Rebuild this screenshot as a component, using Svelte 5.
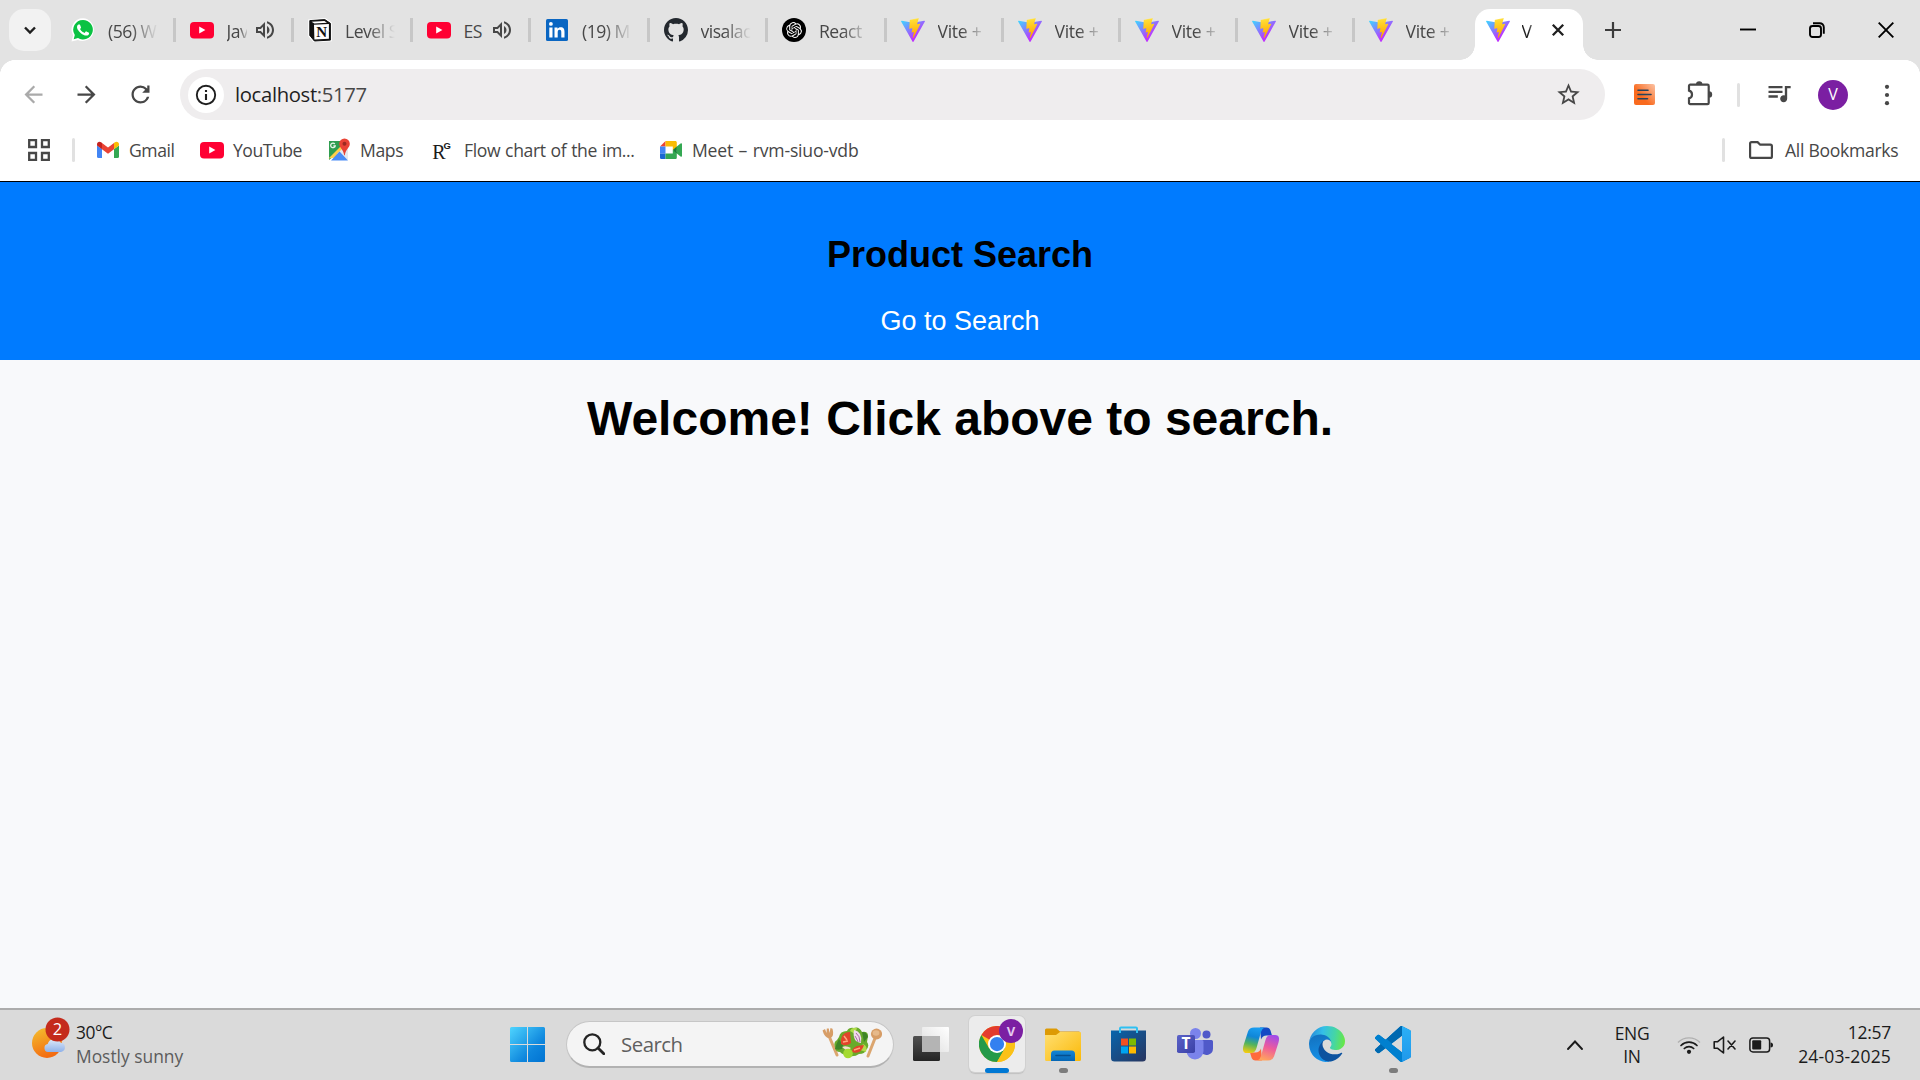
<script>
  const tabs = [
    { icon: 'whatsapp', title: '(56) W' },
    { icon: 'youtube', title: 'Jav', audio: true },
    { icon: 'notion', title: 'Level S' },
    { icon: 'youtube', title: 'ES', audio: true, whole: true },
    { icon: 'linkedin', title: '(19) M' },
    { icon: 'github', title: 'visalac' },
    { icon: 'openai', title: 'React' },
    { icon: 'vite', title: 'Vite +' },
    { icon: 'vite', title: 'Vite +' },
    { icon: 'vite', title: 'Vite +' },
    { icon: 'vite', title: 'Vite +' },
    { icon: 'vite', title: 'Vite +', last: true }
  ];
  const bookmarks = [
    { icon: 'gmail', title: 'Gmail', key: 'gmail' },
    { icon: 'youtube', title: 'YouTube', key: 'yt' },
    { icon: 'maps', title: 'Maps', key: 'maps' },
    { icon: 'rg', title: 'Flow chart of the im...', key: 'flow' },
    { icon: 'meet', title: 'Meet – rvm-siuo-vdb', key: 'meet' }
  ];
</script>

{#snippet favicon(name)}
  {#if name === 'whatsapp'}
    <svg class="fav" viewBox="0 0 24 24">
      <path fill="#fff" d="M12 .3a11.3 11.3 0 0 0-9.9 16.9L.5 23.6l6.4-1.7A11.3 11.3 0 1 0 12 .3z" />
      <path fill="#0bc243" d="M12 1.9a9.8 9.8 0 0 0-8.2 15.1l-1.1 4.2 4.3-1.1A9.8 9.8 0 1 0 12 1.9z" />
      <path fill="#fff" d="M17.472 14.382c-.297-.149-1.758-.867-2.03-.967-.273-.099-.471-.148-.67.15-.197.297-.767.966-.94 1.164-.173.199-.347.223-.644.075-.297-.15-1.255-.463-2.39-1.475-.883-.788-1.48-1.761-1.653-2.059-.173-.297-.018-.458.13-.606.134-.133.298-.347.446-.52.149-.174.198-.298.298-.497.099-.198.05-.371-.025-.52-.075-.149-.669-1.612-.916-2.207-.242-.579-.487-.5-.669-.51-.173-.008-.371-.01-.57-.01-.198 0-.52.074-.792.372-.272.297-1.04 1.016-1.04 2.479 0 1.462 1.065 2.875 1.213 3.074.149.198 2.096 3.2 5.077 4.487.709.306 1.262.489 1.694.625.712.227 1.36.195 1.871.118.571-.085 1.758-.719 2.006-1.413.248-.694.248-1.289.173-1.413-.074-.124-.272-.198-.57-.347z" />
    </svg>
  {:else if name === 'youtube'}
    <svg class="fav" viewBox="0 0 24 24">
      <rect x="0" y="4" width="24" height="16.4" rx="4" fill="#ff0033" />
      <path d="M9.2 8.6v7l6.2-3.5z" fill="#fff" />
    </svg>
  {:else if name === 'notion'}
    <svg class="fav" viewBox="0 0 24 24">
      <path d="M1.2 2.4 17 1l5.8 4v17.4L6.2 23.4 1.2 17.6z" fill="#fff" stroke="#fff" stroke-width="2" />
      <path d="M1.8 2.6 16.8 1.6 22.4 5.3v16.8L6.4 23 1.8 17.4z" fill="#111" stroke="#111" stroke-linejoin="round" />
      <path d="M6 6.8 20.9 5.9v14.8L6.4 21.5zM3.6 3.7 16.4 2.9l2.6 1.8-12.6.8z" fill="#fff" />
      <text x="13.6" y="18.6" text-anchor="middle" class="notion-n">N</text>
    </svg>
  {:else if name === 'linkedin'}
    <svg class="fav" viewBox="0 0 24 24">
      <rect x="1" y="1" width="22" height="22" rx="1.6" fill="#0a66c2" />
      <circle cx="5.9" cy="5.9" r="1.9" fill="#fff" />
      <path fill="#fff" d="M4.3 9.4h3.2v10.2H4.3zM9.5 9.4h3v1.4c.6-1 1.7-1.65 3.1-1.65 3.1 0 3.9 2 3.9 4.8v5.65h-3.2v-5c0-1.3-.1-2.8-1.7-2.8s-1.9 1.3-1.9 2.7v5.1H9.5z" />
    </svg>
  {:else if name === 'github'}
    <svg class="fav" viewBox="0 0 16 16">
      <path fill="#24292f" d="M8 0C3.58 0 0 3.58 0 8c0 3.54 2.29 6.53 5.47 7.59.4.07.55-.17.55-.38 0-.19-.01-.82-.01-1.49-2.01.37-2.53-.49-2.69-.94-.09-.23-.48-.94-.82-1.13-.28-.15-.68-.52-.01-.53.63-.01 1.08.58 1.23.82.72 1.21 1.87.87 2.33.66.07-.52.28-.87.51-1.07-1.78-.2-3.64-.89-3.64-3.95 0-.87.31-1.59.82-2.15-.08-.2-.36-1.02.08-2.12 0 0 .67-.21 2.2.82.64-.18 1.32-.27 2-.27s1.36.09 2 .27c1.53-1.04 2.2-.82 2.2-.82.44 1.1.16 1.92.08 2.12.51.56.82 1.27.82 2.15 0 3.07-1.87 3.75-3.65 3.95.29.25.54.73.54 1.48 0 1.07-.01 1.93-.01 2.2 0 .21.15.46.55.38A8.01 8.01 0 0 0 16 8c0-4.42-3.58-8-8-8z" />
    </svg>
  {:else if name === 'openai'}
    <svg class="fav" viewBox="0 0 24 24">
      <circle cx="12" cy="12" r="12" fill="#000" />
      <path transform="translate(4.1 4.1) scale(.66)" fill="#fff" d="M22.2819 9.8211a5.9847 5.9847 0 0 0-.5157-4.9108 6.0462 6.0462 0 0 0-6.5098-2.9A6.0651 6.0651 0 0 0 4.9807 4.1818a5.9847 5.9847 0 0 0-3.9977 2.9 6.0462 6.0462 0 0 0 .7427 7.0966 5.98 5.98 0 0 0 .511 4.9107 6.051 6.051 0 0 0 6.5146 2.9001A5.9847 5.9847 0 0 0 13.2599 24a6.0557 6.0557 0 0 0 5.7718-4.2058 5.9894 5.9894 0 0 0 3.9977-2.9001 6.0557 6.0557 0 0 0-.7475-7.0729zm-9.022 12.6081a4.4755 4.4755 0 0 1-2.8764-1.0408l.1419-.0804 4.7783-2.7582a.7948.7948 0 0 0 .3927-.6813v-6.7369l2.02 1.1686a.071.071 0 0 1 .038.052v5.5826a4.504 4.504 0 0 1-4.4945 4.4944zm-9.6607-4.1254a4.4708 4.4708 0 0 1-.5346-3.0137l.142.0852 4.783 2.7582a.7712.7712 0 0 0 .7806 0l5.8428-3.3685v2.3324a.0804.0804 0 0 1-.0332.0615L9.74 19.9502a4.4992 4.4992 0 0 1-6.1408-1.6464zM2.3408 7.8956a4.485 4.485 0 0 1 2.3655-1.9728V11.6a.7664.7664 0 0 0 .3879.6765l5.8144 3.3543-2.0201 1.1685a.0757.0757 0 0 1-.071 0l-4.8303-2.7865A4.504 4.504 0 0 1 2.3408 7.872zm16.5963 3.8558L13.1038 8.364 15.1192 7.2a.0757.0757 0 0 1 .071 0l4.8303 2.7913a4.4944 4.4944 0 0 1-.6765 8.1042v-5.6772a.79.79 0 0 0-.407-.667zm2.0107-3.0231l-.142-.0852-4.7735-2.7818a.7759.7759 0 0 0-.7854 0L9.409 9.2297V6.8974a.0662.0662 0 0 1 .0284-.0615l4.8303-2.7866a4.4992 4.4992 0 0 1 6.6802 4.66zM8.3065 12.863l-2.02-1.1638a.0804.0804 0 0 1-.038-.0567V6.0742a4.4992 4.4992 0 0 1 7.3757-3.4537l-.142.0805L8.704 5.459a.7948.7948 0 0 0-.3927.6813zm1.0976-2.3654l2.602-1.4998 2.6069 1.4998v2.9994l-2.5974 1.4997-2.6067-1.4997Z" />
    </svg>
  {:else if name === 'vite'}
    <svg class="fav" viewBox="0 0 256 257">
      <path fill="url(#vite-body)" d="M255.153 37.938L134.897 252.976c-2.483 4.44-8.862 4.466-11.382.048L.875 37.958c-2.746-4.814 1.371-10.646 6.827-9.67l120.385 21.517a6.537 6.537 0 0 0 2.322-.004l117.867-21.483c5.438-.991 9.574 4.796 6.877 9.62Z" />
      <path fill="url(#vite-bolt)" d="M185.432.063L96.44 17.501a3.268 3.268 0 0 0-2.634 3.014l-5.474 92.456a3.268 3.268 0 0 0 3.997 3.378l24.777-5.718c2.318-.535 4.413 1.507 3.936 3.838l-7.361 36.047c-.495 2.426 1.782 4.5 4.151 3.78l15.304-4.649c2.372-.72 4.652 1.36 4.15 3.788l-11.698 56.621c-.732 3.542 3.979 5.473 5.943 2.437l1.313-2.028l72.516-144.72c1.215-2.423-.88-5.186-3.54-4.672l-25.505 4.922c-2.396.462-4.435-1.77-3.759-4.114l16.646-57.705c.677-2.35-1.37-4.583-3.769-4.113Z" />
    </svg>
  {:else if name === 'gmail'}
    <svg class="fav" viewBox="0 0 24 24">
      <path fill="#4285f4" d="M1 7.5v11.1A1.5 1.5 0 0 0 2.5 20.1H6V11z" />
      <path fill="#34a853" d="M23 7.5v11.1a1.5 1.5 0 0 1-1.5 1.5H18V11z" />
      <path fill="#ea4335" d="M6 11.2V4.9l6 4.6 6-4.6v6.3l-6 4.6z" />
      <path fill="#c5221f" d="M1 6.2C1 3.9 3.4 3 5.2 4.3L6 4.9v6.3L1 7.6z" />
      <path fill="#fbbc04" d="M23 6.2c0-2.3-2.4-3.2-4.2-1.9l-.8.6v6.3l5-3.6z" />
    </svg>
  {:else if name === 'maps'}
    <svg class="fav" viewBox="0 0 24 24">
      <path fill="#2f9e50" d="M2 3h18v10L12 14 2 22z" />
      <path fill="#ffd04b" d="M1.5 20.5 14 8l3.5 3.5-8 8z" />
      <path fill="#e6e9ee" d="m10 16 7-7 4 1v12z" />
      <path fill="#4a8cf6" d="M12.5 13.500 21 22.500H4z" />
      <path fill="none" stroke="#e8f5ea" stroke-width="1.3" d="M7.8 6a2.3 2.3 0 1 0 .4 2H6.4" />
      <path fill="#e94335" d="M17.5.5a5.3 5.3 0 0 1 5.3 5.3c0 4-4.3 5.6-5 11.4h-.6c-.7-5.8-5-7.4-5-11.4A5.3 5.3 0 0 1 17.5.5z" />
      <circle cx="17.5" cy="5.8" r="2" fill="#9c2a20" />
    </svg>
  {:else if name === 'rg'}
    <svg class="fav" viewBox="0 0 24 24">
      <text x="1.2" y="21" class="rg-r">R</text>
      <text x="12.6" y="10.8" class="rg-g">G</text>
    </svg>
  {:else if name === 'meet'}
    <svg class="fav" viewBox="0 0 24 24">
      <path fill="#ea4335" d="M6.500 3v5.500H1z" />
      <path fill="#fbbc04" d="M6.500 3h9.700c1 0 1.600.6 1.600 1.600V12l-4 0V8.500H6.500z" />
      <path fill="#4285f4" d="M1 8.500h5.500v7H1z" />
      <path fill="#1967d2" d="M1 15.500h5.500V21H2.600C1.600 21 1 20.400 1 19.400z" />
      <path fill="#34a853" d="M6.500 15.500h7.300V12l4 2v5.400c0 1-.6 1.600-1.600 1.600H6.500z" />
      <path fill="#34a853" d="m17.800 8.600 3.800-3.200c.7-.5 1.400-.2 1.400.6v12c0 .8-.7 1.100-1.400.6l-3.800-3.200z" />
      <path fill="#188038" d="m13.800 12 4-3.400v6.800z" />
    </svg>
  {/if}
{/snippet}

{#snippet path24(cls, d)}
  <svg class={cls} viewBox="0 0 24 24"><path {d} fill="currentColor" /></svg>
{/snippet}

<svg class="defs" width="0" height="0" aria-hidden="true">
  <defs>
    <linearGradient id="vite-body" x1="-.828%" x2="57.636%" y1="7.652%" y2="78.411%">
      <stop offset="0" stop-color="#41d1ff" /><stop offset="1" stop-color="#bd34fe" />
    </linearGradient>
    <linearGradient id="vite-bolt" x1="43.376%" x2="50.316%" y1="2.242%" y2="89.03%">
      <stop offset="0" stop-color="#ffea83" /><stop offset=".083" stop-color="#ffdd35" /><stop offset="1" stop-color="#ffa800" />
    </linearGradient>
    <linearGradient id="note" x1=".35" y1=".6" x2="1" y2="0">
      <stop offset="0" stop-color="#f96a1e" /><stop offset="1" stop-color="#fbc3a5" />
    </linearGradient>
    <linearGradient id="sun" x1="0" y1="0" x2=".4" y2="1">
      <stop offset="0" stop-color="#f4c12f" /><stop offset="1" stop-color="#f36c12" />
    </linearGradient>
    <linearGradient id="cloud" x1="0" y1="0" x2="0" y2="1">
      <stop offset="0" stop-color="#dfe9f8" /><stop offset="1" stop-color="#8fb2ea" />
    </linearGradient>
    <linearGradient id="win" gradientUnits="userSpaceOnUse" x1="0" y1="0" x2="35" y2="35">
      <stop offset="0" stop-color="#4fd5ff" /><stop offset=".65" stop-color="#0e86dd" /><stop offset="1" stop-color="#0173d2" />
    </linearGradient>
    <linearGradient id="tv-back" x1="0" y1="0" x2="0" y2="1">
      <stop offset="0" stop-color="#505050" /><stop offset="1" stop-color="#242424" />
    </linearGradient>
    <linearGradient id="tv-front" x1="1" y1="0" x2="0" y2="1">
      <stop offset="0" stop-color="#fff" /><stop offset="1" stop-color="#dcdcdc" />
    </linearGradient>
    <linearGradient id="folder" x1="0" y1="0" x2="1" y2="1">
      <stop offset="0" stop-color="#ffdf72" /><stop offset="1" stop-color="#fbb908" />
    </linearGradient>
    <linearGradient id="folder-tray" x1="0" y1="0" x2="0" y2="1">
      <stop offset="0" stop-color="#1486d6" /><stop offset="1" stop-color="#0566b5" />
    </linearGradient>
    <linearGradient id="store" x1="0" y1="0" x2="1" y2="1">
      <stop offset="0" stop-color="#0865ad" /><stop offset="1" stop-color="#28355f" />
    </linearGradient>
    <linearGradient id="teams" x1="0" y1="0" x2="1" y2="1">
      <stop offset="0" stop-color="#5b62c8" /><stop offset="1" stop-color="#3a40a6" />
    </linearGradient>
    <linearGradient id="cop-left" x1=".5" y1="0" x2=".3" y2="1">
      <stop offset="0" stop-color="#1a9df0" /><stop offset=".35" stop-color="#0f86d8" /><stop offset=".65" stop-color="#52b35e" /><stop offset="1" stop-color="#f2cc10" />
    </linearGradient>
    <linearGradient id="cop-right" x1=".7" y1="0" x2=".4" y2="1">
      <stop offset="0" stop-color="#a04bea" /><stop offset=".5" stop-color="#ee5b9b" /><stop offset="1" stop-color="#ffa45e" />
    </linearGradient>
    <linearGradient id="edge-top" x1="0" y1=".5" x2="1" y2=".6">
      <stop offset="0" stop-color="#2688d8" /><stop offset=".35" stop-color="#34bfe8" /><stop offset=".7" stop-color="#45d6a4" /><stop offset="1" stop-color="#69e842" />
    </linearGradient>
    <linearGradient id="edge-mid" x1=".3" y1="0" x2=".5" y2="1">
      <stop offset="0" stop-color="#1370bd" /><stop offset="1" stop-color="#1592ea" />
    </linearGradient>
    <linearGradient id="code-panel" x1="0" y1="0" x2="0" y2="1">
      <stop offset="0" stop-color="#2bb0f7" /><stop offset="1" stop-color="#1f98ea" />
    </linearGradient>
    <clipPath id="code-shape">
      <path clip-rule="evenodd" d="M23.15 2.587L18.21.21a1.494 1.494 0 0 0-1.705.29l-9.46 8.63-4.12-3.128a.999.999 0 0 0-1.276.057L.327 7.261A1 1 0 0 0 .326 8.74L3.899 12 .326 15.26a1 1 0 0 0 .001 1.479L1.65 17.94a.999.999 0 0 0 1.276.057l4.12-3.128 9.46 8.63a1.492 1.492 0 0 0 1.704.29l4.942-2.377A1.5 1.5 0 0 0 24 20.06V3.939a1.5 1.5 0 0 0-.85-1.352zm-5.146 14.861L10.826 12l7.178-5.448v10.896z" />
    </clipPath>
  </defs>
</svg>

<div class="screen">
  <div class="tab-strip">
    <button class="tab-search" aria-label="Search tabs">
      <svg viewBox="0 0 14 14"><path d="m2 4.500 5 5 5-5" fill="none" stroke="#1f1f1f" stroke-width="2.4" /></svg>
    </button>
    {#each tabs as tab, i}
      <div class="tab" class:narrow={i > 6} class:last={tab.last}>
        {@render favicon(tab.icon)}
        <span class="tab-title" class:short={tab.audio} class:whole={tab.whole}>{tab.title}</span>
        {#if tab.audio}
          {@render path24('audio', 'M3 9v6h4l5 5V4L7 9H3zm7-.17v6.34L7.83 13H5v-2h2.83L10 8.83zM16.5 12c0-1.77-1.02-3.29-2.5-4.03v8.05c1.48-.73 2.5-2.25 2.5-4.02z M14 3.23v2.06c2.89.86 5 3.54 5 6.71s-2.11 5.85-5 6.71v2.06c4.01-.91 7-4.49 7-8.77s-2.99-7.86-7-8.77z')}
        {/if}
      </div>
    {/each}
    <div class="tab-active">
      {@render favicon('vite')}
      <span class="tab-title">V</span>
      <svg class="close" viewBox="0 0 14 14"><path d="m1.8 1.800 10.400 10.400m0-10.400L1.800 12.200" stroke="#1f1f1f" stroke-width="2.3" /></svg>
    </div>
    <svg class="new-tab" viewBox="0 0 16 16"><path d="M8 0v16M0 8h16" stroke="#3c3c3c" stroke-width="2.2" /></svg>
    <div class="window-controls">
      <svg viewBox="0 0 16 16"><path d="M0 7.500h16" stroke="#000" stroke-width="1.9" /></svg>
      <svg viewBox="0 0 16 16"><rect x="1" y="4" width="11" height="11" rx="2.5" fill="none" stroke="#000" stroke-width="1.9" /><path d="M4 1.200h6.600A4 4 0 0 1 14.800 5.200v6.600" fill="none" stroke="#000" stroke-width="1.9" /></svg>
      <svg viewBox="0 0 16 16"><path d="m.7.7 14.600 14.600m0-14.600L.7 15.300" stroke="#000" stroke-width="1.9" /></svg>
    </div>
  </div>

  <div class="chrome-body">
    <div class="toolbar">
      {@render path24('nav back', 'M20 11H7.83l5.59-5.59L12 4l-8 8 8 8 1.41-1.41L7.83 13H20v-2z')}
      {@render path24('nav forward', 'M4 13h12.17l-5.59 5.59L12 20l8-8-8-8-1.41 1.41L16.17 11H4v2z')}
      {@render path24('nav reload', 'M17.65 6.35A7.958 7.958 0 0 0 12 4c-4.42 0-7.99 3.58-8 8s3.57 8 8 8c3.73 0 6.84-2.55 7.73-6h-2.08A5.99 5.99 0 0 1 12 18c-3.31 0-6-2.69-6-6s2.69-6 6-6c1.66 0 3.14.69 4.22 1.78L13.500 10.500H20V4h-2v2.700z')}
      <div class="omnibox">
        <span class="site-info">
          <svg viewBox="0 0 24 24"><circle cx="12" cy="12" r="9.2" fill="none" stroke="#1f1f1f" stroke-width="1.9" /><path d="M12 11v6M12 7v2.100" stroke="#1f1f1f" stroke-width="2.1" /></svg>
        </span>
        <span class="url">localhost<i>:5177</i></span>
        {@render path24('star', 'M22 9.24l-7.19-.62L12 2 9.19 8.63 2 9.24l5.46 4.73L5.82 21 12 17.27 18.18 21l-1.63-7.03L22 9.24zM12 15.4l-3.76 2.27 1-4.28-3.32-2.88 4.38-.38L12 6.1l1.71 4.04 4.38.38-3.32 2.88 1 4.28L12 15.4z')}
      </div>
      <svg class="note" viewBox="0 0 21 21"><rect width="21" height="21" rx="2" fill="url(#note)" /><path d="M4 6.300h10M4 10.500h13M4 14.700h9.500" stroke="#26435c" stroke-width="1.6" stroke-linecap="round" /></svg>
      <svg class="puzzle" viewBox="0 0 26 26"><path d="M3.3 4.700h17.200a1.200 1.200 0 0 1 1.200 1.200v17a1.200 1.200 0 0 1-1.200 1.200H3.300A1.200 1.200 0 0 1 2 22.900v-4.500q3-.6 3-3.900t-3-3.900V5.900a1.200 1.200 0 0 1 1.300-1.200z" fill="none" stroke="#474747" stroke-width="2.2" /><path d="M9 4.500a3.200 3.200 0 0 1 6.400 0zM22 11.200a3.200 3.200 0 0 1 0 6.400z" fill="#474747" /></svg>
      <i class="divider"></i>
      {@render path24('queue', 'M15 6H3v2h12V6zm0 4H3v2h12v-2zM3 16h8v-2H3v2zM17 6v8.18c-.31-.11-.65-.18-1-.18-1.66 0-3 1.34-3 3s1.34 3 3 3 3-1.34 3-3V8h3V6h-5z')}
      <span class="avatar">V</span>
      <svg class="dots" viewBox="0 0 6 24"><circle cx="3" cy="3.8" r="2.1" fill="#474747" /><circle cx="3" cy="12" r="2.1" fill="#474747" /><circle cx="3" cy="20.2" r="2.1" fill="#474747" /></svg>
    </div>

    <div class="bookmarks">
      <svg class="apps" viewBox="0 0 22 22"><path d="M1.2 1.200h6.800v6.800H1.200zM14 1.200h6.800v6.800H14zM1.200 14h6.800v6.800H1.200zM14 14h6.800v6.800H14z" fill="none" stroke="#474747" stroke-width="2.3" /></svg>
      <i class="divider first"></i>
      {#each bookmarks as mark}
        <span class="bookmark {mark.key}">{@render favicon(mark.icon)}<span>{mark.title}</span></span>
      {/each}
      <i class="divider end"></i>
      <svg class="folder" viewBox="0 0 24 18"><path d="M2.6 1.100h6L11.200 3.700h10.200a1.500 1.500 0 0 1 1.500 1.500v10.200a1.500 1.500 0 0 1-1.500 1.500H2.600a1.500 1.500 0 0 1-1.500-1.500V2.600a1.500 1.500 0 0 1 1.500-1.500z" fill="none" stroke="#474747" stroke-width="2.2" /></svg>
      <span class="all">All Bookmarks</span>
    </div>
  </div>

  <main>
    <header>
      <h2>Product Search</h2>
      <a href="#search">Go to Search</a>
    </header>
    <h1>Welcome! Click above to search.</h1>
  </main>

  <footer>
    <div class="weather">
      <svg viewBox="0 0 40 44">
        <circle cx="17" cy="27" r="15" fill="url(#sun)" />
        <path d="M18 36a4 4 0 0 1-.3-7.900A7 7 0 0 1 30.500 26.500 4.800 4.800 0 0 1 31 36z" fill="url(#cloud)" />
        <circle cx="27.5" cy="13.5" r="12" fill="#c42b1c" />
        <text x="27.5" y="19.3" text-anchor="middle" class="badge-num">2</text>
      </svg>
      <div><p class="temp">30°C</p><p class="sky">Mostly sunny</p></div>
    </div>

    <div class="dock">
      <svg class="start" viewBox="0 0 35 35"><path fill="url(#win)" d="M1.5 0H17v17H0V1.500A1.500 1.500 0 0 1 1.500 0zM18 0h15.500A1.500 1.500 0 0 1 35 1.500V17H18zM0 18h17v17H1.500A1.500 1.500 0 0 1 0 33.500zM18 18h17v15.500a1.500 1.500 0 0 1-1.500 1.500H18z" /></svg>
      <div class="search">
        <svg class="lens" viewBox="0 0 22 22"><circle cx="9.3" cy="9.3" r="8" fill="none" stroke="#242424" stroke-width="2.3" /><path d="m15 15 5.800 5.800" stroke="#242424" stroke-width="2.8" stroke-linecap="round" /></svg>
        <span>Search</span>
        <svg class="salad" viewBox="0 0 60 32">
          <g stroke="#dba56e" stroke-linecap="round" fill="none">
            <path d="m7 9 8 19" stroke-width="3" />
            <path d="M53.500 10 46 29" stroke-width="3" />
          </g>
          <path d="M.5 3.500 3 2l1.500 4L4.800 1.500h2L7.500 6 8.500 1l2 .8Q12.500 9 8.500 11 3 12 .5 3.500z" fill="#d79d66" />
          <ellipse cx="54.500" cy="7" rx="5.600" ry="5.400" fill="#d79d66" /><ellipse cx="54" cy="6" rx="3.400" ry="2.800" fill="#e6b98a" />
          <path d="M17 10q1-6 8-6 2-4 7-3 5-2 8 4 6-1 6 4l-1 6q3 4-1 8-1 4-7 4-4 3-10 2-6-1-9-4-5 0-5-5-2-5 2-7z" fill="#69aa2b" />
          <path d="M17 12q-3 5-4 10 6 2 9-2zM40 5q5 0 6 5l-4 5z" fill="#3e8526" />
          <path d="M28 4q2-4 7-3l-2 6zM41 17q5 2 3 8l-6-2z" fill="#b2dc4b" />
          <path d="M19 17q-1-12 9-12l1 11q-5 4-10 1z" fill="#e1442a" />
          <path d="M30 25q9 3 12-7l-7 1q-5 2-5 6z" fill="#e1442a" />
          <path d="m22 9 3 4m-4 2 5-1m6 9 6-2" stroke="#ffa67d" stroke-width="1.5" />
          <path d="M32 3q9 2 7 13-9-1-7-13z" fill="#f0dcec" /><path d="M34 6q4 3 4 9m-5-6q2 3 3 6" stroke="#aa6aa4" fill="none" />
          <path d="M20 20q4-2 9 1l-4 3z" fill="#f3e0cf" />
          <circle cx="26" cy="26.500" r="4.800" fill="#a4da30" />
        </svg>
      </div>
      <svg class="task-view" viewBox="0 0 36 34"><rect x="0" y="9" width="27" height="25" rx="1.5" fill="url(#tv-back)" /><rect x="9" y="0" width="27" height="25" rx="1" fill="url(#tv-front)" /><rect x="9" y="9" width="18" height="16" fill="#b4b4b4" /></svg>
      <div class="app current">
        <svg class="icon" viewBox="0 0 48 48">
          <circle cx="24" cy="24" r="24" fill="#fbc116" />
          <path d="M24 24 3.200 12A24 24 0 0 1 44.800 12z" fill="#e33b2e" />
          <path d="M3.200 12A24 24 0 0 0 24 48l10.400-18L24 24 13.600 30z" fill="#249a48" />
          <path d="M34.400 30 24 48A24 24 0 0 0 44.800 12H24z" fill="#fbc116" />
          <circle cx="24" cy="24" r="12" fill="#fff" />
          <circle cx="24" cy="24" r="9.5" fill="#3380f0" />
        </svg>
        <span class="profile">V</span>
        <i class="bar"></i>
      </div>
      <div class="app">
        <svg class="icon" viewBox="0 0 36 36">
          <path d="M0 4a1.500 1.500 0 0 1 1.500-1.500h10L15 5.500h19.500v6H0z" fill="#dd9a04" />
          <path d="M0 9h11l4-3h20a1 1 0 0 1 1 1v26.500a1.500 1.500 0 0 1-1.500 1.500h-33A1.500 1.500 0 0 1 0 33.500z" fill="url(#folder)" />
          <path d="M6 35v-7a3.500 3.500 0 0 1 3.500-3.500h17A3.500 3.500 0 0 1 30 28v7z" fill="url(#folder-tray)" />
          <path d="M11 29.500h14" stroke="#064f8f" stroke-width="1.6" stroke-linecap="round" />
        </svg>
        <i class="bar small"></i>
      </div>
      <div class="app">
        <svg class="icon" viewBox="0 0 36 36">
          <path d="M0 4.500h35V32a3.500 3.500 0 0 1-3.500 3.500h-28A3.500 3.500 0 0 1 0 32z" fill="url(#store)" />
          <path d="M9 7V2.500a1 1 0 0 1 1-1h15a1 1 0 0 1 1 1V7" fill="none" stroke="#2fc0f2" stroke-width="2" />
          <path fill="#f25022" d="M10 12.500h7v7h-7z" /><path fill="#7fba00" d="M18 12.500h7v7h-7z" /><path fill="#00a4ef" d="M10 20.500h7v7h-7z" /><path fill="#ffb900" d="M18 20.500h7v7h-7z" />
        </svg>
      </div>
      <div class="app">
        <svg class="icon" viewBox="0 0 36 36">
          <circle cx="18.5" cy="7.5" r="5.5" fill="#7b83eb" /><circle cx="29.5" cy="8.5" r="4" fill="#5059c9" />
          <path d="M24 14h10.500a1.500 1.500 0 0 1 1.500 1.500v7a6.500 6.500 0 0 1-12 3.500z" fill="#5059c9" />
          <path d="M11 14h14a1.500 1.500 0 0 1 1.500 1.500V25a8.500 8.500 0 0 1-17 0V15.500z" fill="#7b83eb" />
          <rect x="0" y="9" width="18" height="18" rx="1.8" fill="url(#teams)" />
          <text x="9" y="23" text-anchor="middle" class="teams-t">T</text>
        </svg>
      </div>
      <div class="app">
        <svg class="icon" viewBox="0 0 36 36">
          <path d="M17 1.500h6.500q3 0 4 3l1.500 5h-5.500q-4 0-5.500 4z" fill="#1349c4" />
          <path d="M19 34.500h-6.500q-3 0-4-3l-1.500-5h5.500q4 0 5.500-4z" fill="#ff6a3c" />
          <path d="M11 1.500h10.500q-2.500 1-3.500 4.500l-4.500 16q-1.300 5-5.500 5H4q-5.500 0-3.500-7.500L5 5.500q1.300-4 6-4z" fill="url(#cop-left)" />
          <path d="M25 34.500H14.500q2.500-1 3.500-4.500l4.500-16q1.300-5 5.500-5h4q5.500 0 3.500 7.500L31 30.500q-1.300 4-6 4z" fill="url(#cop-right)" />
        </svg>
      </div>
      <div class="app">
        <svg class="icon" viewBox="0 0 256 256">
          <path fill="#0c529f" d="M230.75 190.6a93.07 93.07 0 0 1-10.54 4.71 101.9 101.9 0 0 1-35.9 6.46c-47.32 0-88.54-32.55-88.54-74.32a31.48 31.48 0 0 1 16.43-27.03c-42.8 1.8-53.8 46.4-53.8 72.53 0 73.88 68.09 81.37 82.76 81.37 7.91 0 19.84-2.3 27-4.56l1.31-.44A128.34 128.34 0 0 0 236.1 196.1a4 4 0 0 0-5.35-5.5Z" />
          <path fill="url(#edge-mid)" d="M105.73 241.42A79.2 79.2 0 0 1 83 220.08a80.7 80.7 0 0 1 29.5-119.83c3.12-1.47 8.45-4.13 15.54-4a32.35 32.35 0 0 1 25.69 13 31.88 31.88 0 0 1 6.36 18.66c0-.21 24.46-79.6-80-79.6-43.9 0-80 41.66-80 78.21a130.15 130.15 0 0 0 12.11 56 128 128 0 0 0 156.38 67.11 75.55 75.55 0 0 1-62.78-8Z" />
          <path fill="url(#edge-top)" d="M152.33 148.86c-.81 1.05-3.3 2.5-3.3 5.66 0 2.61 1.7 5.12 4.72 7.23 14.38 10 41.49 8.68 41.56 8.68a59.56 59.56 0 0 0 30.27-8.35A61.38 61.38 0 0 0 256 109.2c.26-22.41-8-37.31-11.34-43.91C223.46 23.84 177.72 0 128 0A128 128 0 0 0 0 126.2c.48-36.54 36.8-66.05 80-66.05 3.5 0 23.46.34 42 10.07 16.34 8.58 24.9 18.94 30.85 29.21 6.18 10.67 7.28 24.15 7.28 29.52s-2.74 13.33-7.8 19.91Z" />
        </svg>
      </div>
      <div class="app">
        <svg class="icon" viewBox="0 0 24 24">
          <g clip-path="url(#code-shape)">
            <path d="M0 0h24v24H0z" fill="#0080cf" />
            <path d="M18 0v6.550L3 18 0 18v-3L17 0z" fill="#0069b0" />
            <path d="M0 4.500h3L18 17.450V24h-1L0 8.700z" fill="#0080cf" />
            <path d="M18 0h6v24h-6z" fill="url(#code-panel)" />
          </g>
        </svg>
        <i class="bar small"></i>
      </div>
    </div>

    <div class="tray">
      <svg class="chevron" viewBox="0 0 16 10"><path d="m1 9 7-7.500L15 9" fill="none" stroke="#1b1b1b" stroke-width="1.9" stroke-linecap="round" /></svg>
      <div class="lang"><p>ENG</p><p>IN</p></div>
      <svg class="wifi" viewBox="0 0 24 18"><path d="M1 6.500a15.500 15.500 0 0 1 22 0" fill="none" stroke="#b0b0b0" stroke-width="1.4" /><path d="M4 9.500a11.300 11.300 0 0 1 16 0M7.300 12.500a6.700 6.700 0 0 1 9.400 0" fill="none" stroke="#1b1b1b" stroke-width="1.7" stroke-linecap="round" /><circle cx="12" cy="15.8" r="2.1" fill="#1b1b1b" /></svg>
      <svg class="mute" viewBox="0 0 24 18"><path d="M1.2 5.700h3.500L10.500 1v16l-5.800-4.700H1.200zM15 5l7 8m0-8-7 8" fill="none" stroke="#1b1b1b" stroke-width="1.6" stroke-linejoin="round" stroke-linecap="round" /></svg>
      <svg class="battery" viewBox="0 0 24 16"><rect x=".9" y=".9" width="19.7" height="14" rx="3" fill="none" stroke="#1b1b1b" stroke-width="1.5" /><rect x="3.2" y="3.3" width="9" height="9.2" rx="1" fill="#1b1b1b" /><path d="M21.5 5.500q2.500 0 2.500 2.500t-2.500 2.500z" fill="#1b1b1b" /></svg>
      <div class="clock"><p>12:57</p><p class="date">24-03-2025</p></div>
    </div>
  </footer>
</div>

<style>
  :global(body) { margin: 0; overflow: hidden; }
  .defs { position: absolute; }
  svg { display: block; flex: none; }
  p { margin: 0; }
  .screen {
    width: 1920px; height: 1080px; display: flex; flex-direction: column; overflow: hidden;
    background: #f8f9fb; font: 18px/24px 'Open Sans', 'Noto Sans', sans-serif; color: #474747;
  }

  .tab-strip { height: 60px; display: flex; align-items: center; background: #e3e3e3; flex: none; }
  .tab-search {
    width: 42px; height: 42px; margin: 0 6px 0 9px; padding: 0; border: 0; border-radius: 15px;
    background: #f2f2f2; display: flex; align-items: center; justify-content: center; flex: none;
  }
  .tab-search svg { width: 14px; height: 14px; }
  .fav { width: 24px; height: 24px; }
  .tab {
    width: 118.5px; height: 24px; box-sizing: border-box; padding-left: 14px; display: flex;
    align-items: center; border-right: 3px solid #c7c7c7; flex: none;
  }
  .tab.narrow { width: 117px; }
  .tab.last { border-right-color: transparent; }
  .tab-title {
    width: 50px; margin-left: 13px; padding-top: 2px; white-space: nowrap;
    letter-spacing: -0.5px; font-size: 17.6px;
    mask-image: linear-gradient(to right, #000 46%, transparent);
  }
  .narrow .tab-title { letter-spacing: -0.3px; }
  .tab-title.short { width: 20px; mask-image: linear-gradient(to right, #000 60%, transparent 110%); }
  .tab-title.whole { mask-image: none; }
  .audio { width: 24px; height: 24px; margin-left: 6px; }
  .tab-active {
    position: relative; width: 108px; height: 51px; box-sizing: border-box; margin: 9px 0 0 3px;
    padding: 0 0 9px 11px; display: flex; align-items: center; flex: none;
    background: #fff; border-radius: 15px 15px 0 0; color: #1f1f1f;
  }
  .tab-active::before, .tab-active::after {
    content: ''; position: absolute; bottom: 0; width: 15px; height: 15px;
  }
  .tab-active::before { left: -15px; background: radial-gradient(circle at 0 0, transparent 14.5px, #fff 15px); }
  .tab-active::after { right: -15px; background: radial-gradient(circle at 100% 0, transparent 14.5px, #fff 15px); }
  .tab-active .tab-title { width: 11px; margin-left: 12px; mask-image: linear-gradient(to right, #000 60%, rgba(0, 0, 0, .5)); }
  .close { width: 14px; height: 14px; margin-left: 18px; }
  .new-tab { width: 16px; height: 16px; margin-left: 22px; }
  .window-controls { margin: 0 26.5px 1px auto; display: flex; gap: 53px; }
  .window-controls svg { width: 16px; height: 16px; }

  .chrome-body {
    height: 122px; box-sizing: border-box; border-bottom: 1px solid #000; flex: none;
    background: linear-gradient(#fff, #fff) 0 15px / 100% 100% no-repeat, radial-gradient(circle at 15px 15px, #fff 14.7px, transparent 15.2px) 0 0 / 15px 15px no-repeat,
      radial-gradient(circle at 0 15px, #fff 14.7px, transparent 15.2px) 100% 0 / 15px 15px no-repeat,
      linear-gradient(#fff, #fff) 15px 0 / calc(100% - 30px) 15px no-repeat, #e3e3e3;
  }
  .toolbar { height: 51px; padding-top: 9px; display: flex; align-items: center; }
  .nav { width: 27px; height: 27px; color: #474747; }
  .back { margin-left: 20px; color: #aaa; }
  .forward { margin-left: 26px; }
  .reload { margin-left: 27px; }
  .omnibox {
    width: 1425px; height: 51px; box-sizing: border-box; margin-left: 26px; padding: 0 23px 0 8px;
    display: flex; align-items: center; background: #efedee; border-radius: 26px; flex: none;
  }
  .site-info {
    width: 36px; height: 36px; border-radius: 50%; background: #fff;
    display: flex; align-items: center; justify-content: center;
  }
  .site-info svg { width: 24px; height: 24px; }
  .url { margin: 0 auto 1px 11px; font-size: 20.3px; color: #1f1f1f; letter-spacing: -0.35px; }
  .url i { font-style: normal; color: #474747; }
  .star { width: 27px; height: 27px; color: #474747; }
  .note { width: 21px; height: 21px; margin-left: 29px; }
  .puzzle { width: 26px; height: 26px; margin: 0 0 3px 32px; }
  .divider { width: 3px; height: 24px; border-radius: 2px; background: #e1e1e1; flex: none; }
  .toolbar .divider { margin-left: 24px; }
  .queue { width: 28px; height: 28px; margin: 0 0 3px 25px; color: #474747; }
  .avatar {
    width: 30px; height: 30px; margin-left: 25px; border-radius: 50%; background: #7b1fa2;
    color: #fff; font-size: 16px; line-height: 29px; text-align: center; flex: none;
  }
  .dots { width: 6px; height: 24px; margin-left: 36px; }

  .bookmarks { height: 60px; display: flex; align-items: center; white-space: nowrap; }
  .bookmarks span span, .all { padding-bottom: 1px; font-size: 17.6px; }
  .apps { width: 22px; height: 22px; margin-left: 28px; }
  .divider.first { margin-left: 22px; }
  .bookmark { display: flex; align-items: center; gap: 9px; flex: none; }
  .gmail { width: 104px; margin-left: 21px; letter-spacing: -0.45px; }
  .yt { width: 127px; letter-spacing: -0.5px; }
  .maps { width: 104px; letter-spacing: -0.4px; }
  .flow { width: 228px; letter-spacing: -0.4px; word-spacing: 0.8px; }
  .meet { letter-spacing: -0.2px; word-spacing: 1.2px; }
  .divider.end { margin-left: auto; }
  .folder { width: 24px; height: 18px; margin-left: 24px; }
  .all { width: 114px; margin: 0 21px 0 12px; letter-spacing: -0.3px; }

  main { flex: 1; font-family: 'Liberation Sans', Arial, sans-serif; text-align: center; color: #000; background: #f8f9fb; }
  header { height: 178px; box-sizing: border-box; padding-top: 52px; background: #007bff; }
  h2 { margin: 0; font-size: 36px; line-height: 42px; }
  header a { display: block; margin-top: 30px; color: #fff; font-size: 27px; line-height: 30px; text-decoration: none; }
  h1 { margin: 32px 0 0; font-size: 48px; line-height: 54px; }

  footer {
    height: 72px; box-sizing: border-box; border-top: 2px solid #acacac; background: #dadada;
    display: flex; align-items: center; flex: none; color: #1b1b1b;
  }
  footer p { line-height: 24px; }
  .weather { width: 480px; padding-left: 30px; display: flex; align-items: center; gap: 6px; }
  .weather svg { width: 40px; height: 44px; margin-bottom: 14px; }
  .weather p { font-size: 17.4px; }
  .weather .temp { letter-spacing: -0.5px; }
  .weather .sky { color: #5c5c5c; letter-spacing: 0; }
  .weather div { padding-bottom: 3px; }
  .dock { display: flex; align-items: center; width: 932px; padding-bottom: 1.5px; }
  .start { width: 35px; height: 35px; }
  .search {
    width: 328px; height: 47px; box-sizing: border-box; margin: 0 19px 0 21px; padding: 0 11px 0 16px;
    display: flex; align-items: center; border-radius: 24px; background: #f4f4f4;
    border: 1.5px solid #c6c6c6; border-bottom: 2px solid #b2b2b2; flex: none;
  }
  .lens { width: 22px; height: 22px; }
  .search span { margin: 0 auto 0 16px; color: #5f5f5f; font-size: 20.4px; letter-spacing: -0.5px; }
  .salad { width: 60px; height: 32px; margin-bottom: 1px; }
  .task-view { width: 36px; height: 34px; margin-right: 20px; }
  .app {
    position: relative; width: 56px; height: 56px; margin-right: 10px; display: flex;
    align-items: center; justify-content: center; flex: none;
  }
  .current { background: #ececec; border-radius: 6px; box-shadow: 0 0 0 1px #d0d0d0, 0 2px 1px #c0c0c0; }
  .icon { width: 36px; height: 36px; }
  .profile {
    position: absolute; left: 30px; top: 3px; width: 24px; height: 24px; border-radius: 50%;
    background: #7b1fa2; color: #e5c9ef; font: bold 13px/24px 'Open Sans', sans-serif; text-align: center;
  }
  .bar {
    position: absolute; bottom: -1px; left: 16px; width: 24px; height: 5px; border-radius: 3px;
    background: #0078d4;
  }
  .bar.small { left: 24px; width: 9px; background: #7c7c7c; }
  .tray { display: flex; align-items: center; margin-left: auto; padding-right: 29px; }
  .tray p { font-size: 17.5px; }
  .chevron { width: 16px; height: 10px; }
  .lang { width: 40px; margin: 0 25px 0 29px; text-align: center; letter-spacing: -0.4px; }
  .lang p { line-height: 23px; }
  .wifi { width: 24px; height: 18px; }
  .mute { width: 24px; height: 18px; margin-left: 12px; }
  .battery { width: 24px; height: 16px; margin-left: 12px; }
  .clock { width: 118px; padding-bottom: 3px; text-align: right; letter-spacing: -0.25px; }
  .date { letter-spacing: 0.15px; }

  .notion-n { font: bold 15px 'Liberation Serif', serif; fill: #111; }
  .rg-r { font: 20px 'Liberation Serif', serif; fill: #1a1a1a; }
  .rg-g { font: bold 9.5px 'Liberation Sans', sans-serif; fill: #1a1a1a; }
  .badge-num { font: 16.5px 'Open Sans', sans-serif; fill: #fff; }
  .teams-t { font: bold 15.5px 'Open Sans', sans-serif; fill: #fff; }
</style>
